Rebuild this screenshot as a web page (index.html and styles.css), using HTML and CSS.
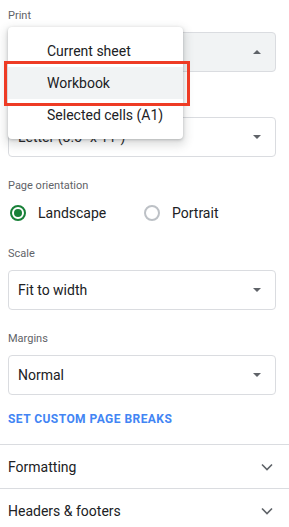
FILE: index.html
```html
<!DOCTYPE html>
<html lang="en">
<head>
    <meta charset="UTF-8">
    <meta name="viewport" content="width=device-width, initial-scale=1.0">
    <title>Print settings</title>
    <link rel="stylesheet" href="styles.css">
</head>
<body>

    <div class="sidebar">
        <div class="settings">

            <div class="field print-field">
                <div class="field-label">Print</div>
                <div class="select open">
                    <span class="select-value"></span>
                    <span class="arrow up"></span>
                </div>

                <!-- open dropdown for the Print field -->
                <div class="menu">
                    <div class="menu-item">Current sheet</div>
                    <div class="menu-item active">Workbook</div>
                    <div class="menu-item">Selected cells (A1)</div>
                    <div class="highlight-box"></div>
                </div>
            </div>

            <div class="field">
                <div class="field-label">Paper size</div>
                <div class="select">
                    <span class="select-value">Letter (8.5" x 11")</span>
                    <span class="arrow"></span>
                </div>
            </div>

            <div class="field">
                <div class="field-label">Page orientation</div>
                <div class="radio-row">
                    <label class="radio checked"><span class="radio-dot"></span>Landscape</label>
                    <label class="radio"><span class="radio-dot"></span>Portrait</label>
                </div>
            </div>

            <div class="field">
                <div class="field-label">Scale</div>
                <div class="select">
                    <span class="select-value">Fit to width</span>
                    <span class="arrow"></span>
                </div>
            </div>

            <div class="field">
                <div class="field-label">Margins</div>
                <div class="select">
                    <span class="select-value">Normal</span>
                    <span class="arrow"></span>
                </div>
            </div>

            <a class="link-btn" href="#">Set custom page breaks</a>
        </div>

        <div class="section-row">
            <span>Formatting</span>
            <svg class="chevron" width="12" height="8" viewBox="0 0 12 8"><path d="M1 1.5 L6 6.5 L11 1.5" fill="none" stroke="#5f6368" stroke-width="1.6"/></svg>
        </div>
        <div class="section-row">
            <span>Headers &amp; footers</span>
            <svg class="chevron" width="12" height="8" viewBox="0 0 12 8"><path d="M1 1.5 L6 6.5 L11 1.5" fill="none" stroke="#5f6368" stroke-width="1.6"/></svg>
        </div>
    </div>

</body>
</html>
```

FILE: styles.css
```css
body {
    margin: 0;
    background: #fff;
    color: #202124;
    font-family: Roboto, "Noto Sans", Arial, sans-serif;
}
.sidebar {
    width: 289px;
}
.settings {
    padding: 8px 13px 0 8px;
}
.field {
    position: relative;
    margin-bottom: 21px;
}
.field-label {
    font-size: 11px;
    line-height: 16px;
    color: #5f6368;
    margin-bottom: 8px;
}
.select {
    height: 40px;
    border: 1px solid #dadce0;
    border-radius: 4px;
    box-sizing: border-box;
    display: flex;
    align-items: center;
    justify-content: space-between;
    padding: 0 14px 0 9px;
    font-size: 14px;
}
.select.open {
    background: #f1f3f4;
}
.arrow {
    width: 0;
    height: 0;
    border-left: 4px solid transparent;
    border-right: 4px solid transparent;
    border-top: 4px solid #5f6368;
}
.arrow.up {
    border-top: none;
    border-bottom: 4px solid #5f6368;
}
.menu {
    position: absolute;
    top: 19px;
    left: 0;
    width: 175px;
    padding: 8px 0 8px;
    background: #fff;
    border-radius: 4px;
    box-shadow: 0 1px 3px rgba(60, 64, 67, 0.3), 0 4px 8px 3px rgba(60, 64, 67, 0.15);
    z-index: 2;
}
.menu-item {
    height: 32px;
    line-height: 32px;
    padding-left: 39px;
    font-size: 14px;
    color: #202124;
}
.menu-item.active {
    background: #f1f3f4;
}
.highlight-box {
    position: absolute;
    left: -4px;
    top: 34px;
    width: 186px;
    height: 45px;
    box-sizing: border-box;
    border: 3px solid #ee3b24;
}
.radio-row {
    display: flex;
    height: 24px;
    align-items: center;
    margin-top: -1px;
}
.radio {
    display: flex;
    align-items: center;
    font-size: 14px;
    width: 134px;
}
.radio-dot {
    width: 16px;
    height: 16px;
    box-sizing: border-box;
    border: 2px solid #bdc1c6;
    border-radius: 50%;
    margin: 0 12px 0 2px;
    display: flex;
    align-items: center;
    justify-content: center;
}
.radio.checked .radio-dot {
    border-color: #188038;
}
.radio.checked .radio-dot::after {
    content: "";
    width: 8px;
    height: 8px;
    border-radius: 50%;
    background: #188038;
}
.link-btn {
    display: block;
    margin-top: -5px;
    line-height: 16px;
    font-size: 12px;
    font-weight: bold;
    letter-spacing: 0.45px;
    text-transform: uppercase;
    color: #4285f4;
    text-decoration: none;
    padding-bottom: 17px;
}
.section-row {
    height: 43px;
    border-top: 1px solid #dadce0;
    display: flex;
    align-items: center;
    justify-content: space-between;
    padding: 0 16px 0 8px;
    font-size: 14px;
}
```
